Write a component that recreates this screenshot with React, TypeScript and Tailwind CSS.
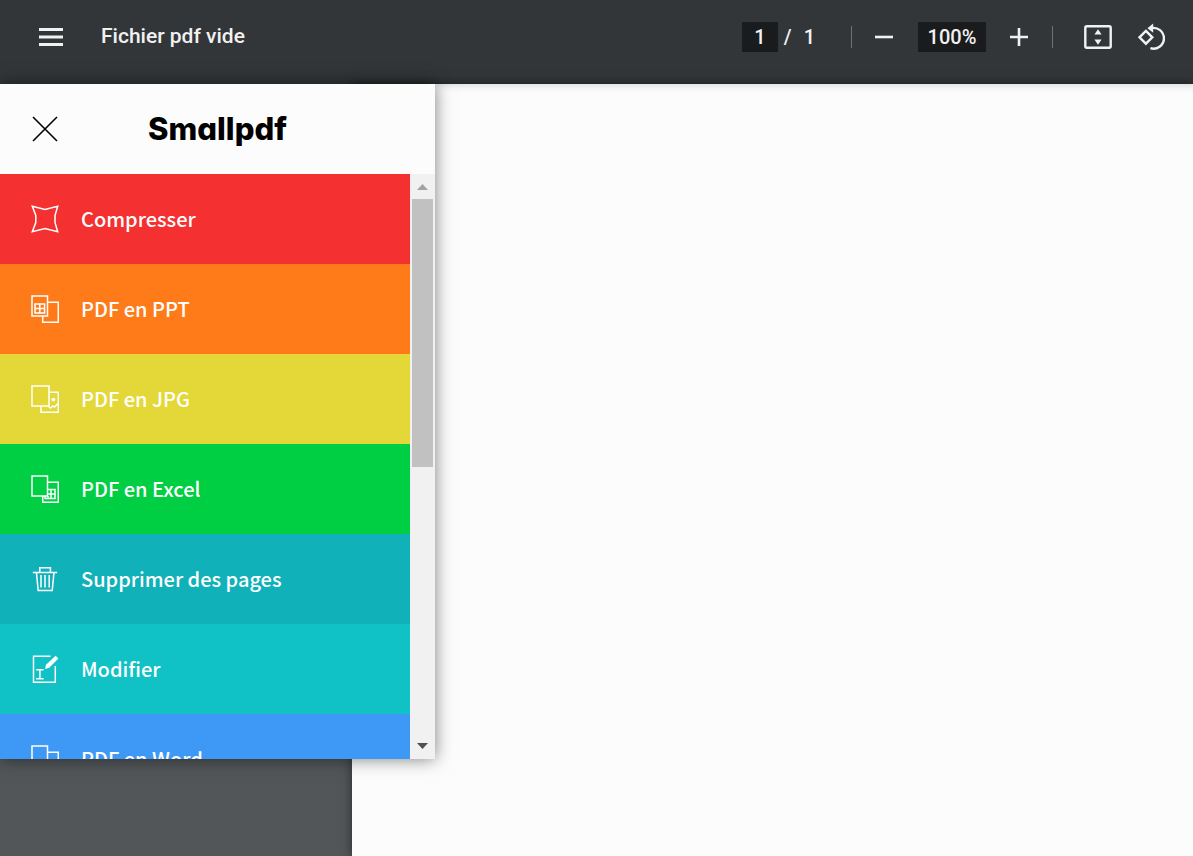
import React, { useState } from 'react'

const tools = [
  { name: 'Compresser', icon: 'compress', color: 'bg-[#f43031]' },
  { name: 'PDF en PPT', icon: 'ppt', color: 'bg-[#ff7b1a]' },
  { name: 'PDF en JPG', icon: 'jpg', color: 'bg-[#e3d837]' },
  { name: 'PDF en Excel', icon: 'excel', color: 'bg-[#00ce43]' },
  { name: 'Supprimer des pages', icon: 'trash', color: 'bg-[#10b1b9]' },
  { name: 'Modifier', icon: 'edit', color: 'bg-[#10c1c6]' },
  { name: 'PDF en Word', icon: 'word', color: 'bg-[#3e98f6]' },
]

const ToolIcon = ({ name }: { name: string }) => (
  <svg viewBox="0 0 28 28" className="h-7 w-7 shrink-0" fill="none" stroke="currentColor" strokeWidth="1.5">
    {name === 'compress' && <path d="M1.3 1.3 14 4.4 26.7 1.3 24 10.5v7L26.7 26.7 14 23.6 1.3 26.7 4.8 17.5v-7z" />}
    {name === 'ppt' && (
      <>
        <path d="M1 1h15.5v20H1zM16.5 7.3H27.3v20H11.7V21" />
        <path d="M4 9h9.6v9H4zM8.8 9v9M4 13.5h9.6" />
      </>
    )}
    {name === 'jpg' && (
      <>
        <path d="M1 1h17v20H1zM18 7.3h9.3v20H10V21M17.5 21.5l2 1.5 2.5-2 1.5 1 3.5-3.5" />
        <circle cx="22.4" cy="14.6" r="1.9" fill="currentColor" stroke="none" />
      </>
    )}
    {name === 'excel' && (
      <>
        <path d="M1 1h15.5v20H1zM16.5 7.3H27.3v20H11.7V21" />
        <path d="M16.5 14.6H24v9H14V21M20 14.6v9M16.5 19H24M17 21v2.6" />
      </>
    )}
    {name === 'trash' && (
      <>
        <path d="M1.8 7.4h24.4M8.8 7.4V2.8h10.6v4.6M5.4 7.4l1.8 18.2h14L23 7.4" />
        <path d="M10 10v12.5M14 10v12.5M18.2 10v12.5" />
      </>
    )}
    {name === 'edit' && (
      <>
        <path d="M19.5 1.2H2.5v26h21.8V11" />
        <path d="M5.2 14.8h7.4M8.9 14.8v9M5.2 23.8h7.4" />
        <path d="m14 14 1-4.2L24.6.8l2.8 2.8-9.2 9.2z" fill="currentColor" stroke="none" />
      </>
    )}
    {name === 'word' && <path d="M1 1h15.5v20H1zM16.5 7.3H27.3v20H11.7V21" />}
  </svg>
)

const Toolbar = ({ onMenu }: { onMenu: () => void }) => {
  const [page, setPage] = useState('1')
  const [zoom, setZoom] = useState(100)

  return (
    <header className="relative z-10 flex h-[84px] items-center bg-[#323639] pr-7 pb-[10px] pl-[39px] text-xl font-medium text-[#f1f1f1]">
      <button aria-label="Menu" onClick={onMenu}>
        <svg viewBox="0 0 24 18" className="h-[18px] w-6" fill="currentColor">
          <path d="M0 0h24v3H0zM0 7.5h24v3H0zM0 15h24v3H0z" />
        </svg>
      </button>
      <h1 className="ml-[38px] text-[21px] font-medium">Fichier pdf vide</h1>

      <div className="ml-auto flex items-center">
        <input
          aria-label="Page"
          value={page}
          onChange={(e) => setPage(e.target.value)}
          className="h-[30px] w-9 bg-[#191b1c] text-center outline-none"
        />
        <span className="ml-1.5">/</span>
        <span className="ml-3">1</span>

        <div className="ml-9 h-[22px] w-px bg-[#6f7274]" />

        <button aria-label="Zoom arrière" className="ml-5" onClick={() => setZoom(Math.max(25, zoom - 25))}>
          <svg viewBox="0 0 24 24" className="h-6 w-6" stroke="currentColor" strokeWidth="2.6">
            <path d="M3 12h18" />
          </svg>
        </button>
        <input
          aria-label="Zoom"
          readOnly
          value={`${zoom}%`}
          className="ml-[22px] h-[30px] w-[68px] bg-[#191b1c] text-center outline-none"
        />
        <button aria-label="Zoom avant" className="ml-[21px]" onClick={() => setZoom(Math.min(500, zoom + 25))}>
          <svg viewBox="0 0 24 24" className="h-6 w-6" stroke="currentColor" strokeWidth="2.6">
            <path d="M3 12h18M12 3v18" />
          </svg>
        </button>

        <div className="ml-[21px] h-[22px] w-px bg-[#6f7274]" />

        <button aria-label="Ajuster à la page" className="ml-[31px]">
          <svg viewBox="0 0 28 28" className="h-7 w-7" fill="none" stroke="currentColor" strokeWidth="2.4">
            <rect x="1.3" y="3.3" width="25.4" height="21.4" rx="1.5" />
            <path d="m14 6.2 3.6 5.2h-7.2zM14 21.8l3.6-5.2h-7.2z" fill="currentColor" stroke="none" />
          </svg>
        </button>
        <button aria-label="Pivoter" className="ml-[25px]">
          <svg viewBox="0 0 28 28" className="h-7 w-7" fill="none" stroke="currentColor" strokeWidth="2.4">
            <path d="m8.9 7.9 6.4 6.4-6.4 6.4-6.4-6.4z" />
            <path d="M14 5.2a10.4 10.4 0 1 1-.6 20" />
            <path d="M16.2.4v9.4L10.4 5.2z" fill="currentColor" stroke="none" />
          </svg>
        </button>
      </div>
    </header>
  )
}

const ToolMenu = ({ onClose }: { onClose: () => void }) => (
  <nav className="absolute top-0 left-0 z-20 flex h-[675px] w-[435px] flex-col bg-[#fcfcfc] shadow-[0_0_16px_rgba(0,0,0,0.5)]">
    <div className="flex h-[90px] shrink-0 items-center px-8 text-black">
      <button aria-label="Fermer" onClick={onClose}>
        <svg viewBox="0 0 26 26" className="h-[26px] w-[26px]" stroke="currentColor" strokeWidth="1.6">
          <path d="m1 1 24 24M25 1 1 25" />
        </svg>
      </button>
      <div className="flex-1 pr-[26px] text-center font-[Inter] text-[31px] leading-9 font-extrabold [font-feature-settings:'cv11']">
        Smallpdf
      </div>
    </div>

    <div className="flex min-h-0 flex-1">
      <ul className="flex-1 overflow-y-auto [scrollbar-width:none]">
        {tools.map((tool) => (
          <li key={tool.name}>
            <a
              href="#"
              className={`flex h-[90px] items-center gap-[22px] pl-[31px] font-['Noto_Sans_CJK_SC',sans-serif] text-xl font-medium text-white ${tool.color}`}
            >
              <ToolIcon name={tool.icon} />
              {tool.name}
            </a>
          </li>
        ))}
      </ul>

      {/* Scrollbar */}
      <div className="flex w-[25px] flex-col items-center bg-[#f1f1f1]">
        <svg viewBox="0 0 25 25" className="h-[25px] w-[25px] shrink-0 fill-[#a3a3a3]">
          <path d="m12.5 10 5.5 6H7z" />
        </svg>
        <div className="min-h-0 flex-1">
          <div className="h-1/2 w-[21px] bg-[#c1c1c1]" />
        </div>
        <svg viewBox="0 0 25 25" className="h-[25px] w-[25px] shrink-0 fill-[#505050]">
          <path d="M7 9h11l-5.5 6z" />
        </svg>
      </div>
    </div>
  </nav>
)

const App = () => {
  const [open, setOpen] = useState(true)

  return (
    <div className="flex min-h-screen flex-col font-[Roboto,sans-serif]">
      <Toolbar onMenu={() => setOpen(!open)} />
      <main className="relative z-20 flex flex-1 bg-[#525659]">
        <div className="w-[352px] shrink-0" />
        <section className="flex-1 bg-[#fcfcfc] shadow-[inset_0_10px_10px_-10px_rgba(0,0,0,0.2),0_0_10px_rgba(0,0,0,0.5)]" />
        {open && <ToolMenu onClose={() => setOpen(false)} />}
      </main>
    </div>
  )
}

export default App
